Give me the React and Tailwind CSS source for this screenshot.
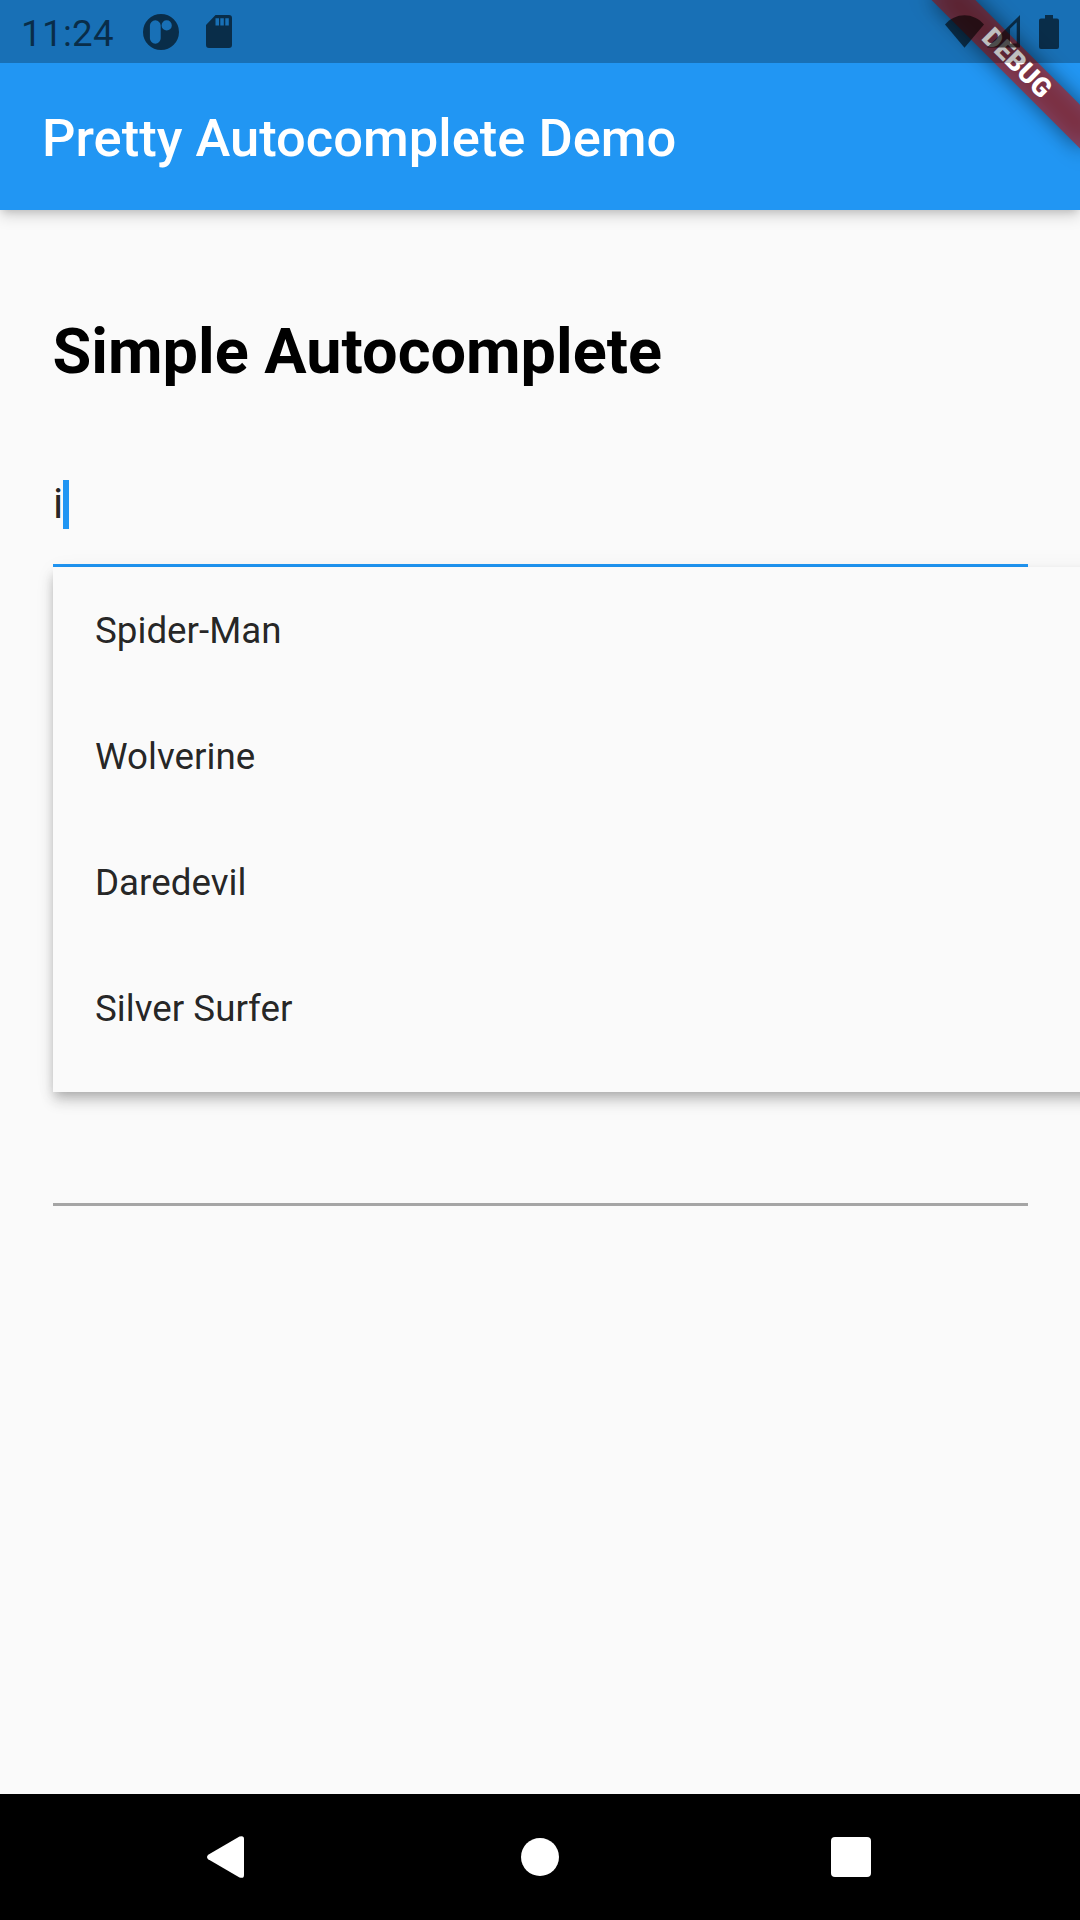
const heroes = ["Spider-Man", "Wolverine", "Daredevil", "Silver Surfer"];

function DebugBanner() {
  return (
    <div className="absolute left-full top-0 h-0 w-0 origin-top-left rotate-45">
      <div className="absolute -left-[105px] top-[73.5px] h-[31.5px] w-[210px] bg-black/50 blur-[10.4px]" />
      <div className="absolute -left-[105px] top-[73.5px] flex h-[31.5px] w-[210px] items-center justify-center bg-[#b71c1c]/63 text-[26.775px] leading-none font-black text-white">
        DEBUG
      </div>
    </div>
  );
}

function StatusBar() {
  return (
    <div className="relative z-20 flex h-[63px] shrink-0 items-center bg-black/25 pl-[21px] text-black/60">
      <span className="w-[122px] pt-[4px] text-[36.75px] leading-[59px] tracking-[0.3px]">11:24</span>
      <svg className="h-[36px] w-[36px]" viewBox="0 0 36 36" fill="currentColor" fillRule="evenodd">
        <path d="M18 0a18 18 0 1 1 0 36a18 18 0 0 1 0-36ZM12.3 6.3a5.4 5.4 0 0 0-5.4 5.4v12.6a5.4 5.4 0 0 0 10.8 0v-12.6a5.4 5.4 0 0 0-5.4-5.4ZM23.7 6.3a5.1 5.1 0 1 0 0 10.2a5.1 5.1 0 0 0 0-10.2Z" />
      </svg>
      <svg className="ml-[27px] h-[33px] w-[26px]" viewBox="0 0 26 33" fill="currentColor" fillRule="evenodd">
        <path d="M9.5 0H23a3 3 0 0 1 3 3V30a3 3 0 0 1-3 3H3a3 3 0 0 1-3-3V10ZM9.5 3.3V10.6H13V3.3ZM14.3 3.3V10.6H17.8V3.3ZM19.3 3.3V10.6H22.8V3.3Z" />
      </svg>
      <div className="ml-auto flex items-start pr-[21px]">
        <svg className="h-[33px] w-[39px]" viewBox="0 0 39 33" fill="currentColor">
          <path d="M0 9.5C5 3.7 12 .3 19.5 .3S34 3.7 39 9.5L19.5 32.7Z" />
        </svg>
        <svg className="ml-[3px] h-[33px] w-[33px]" viewBox="0 0 33 33" fill="currentColor" fillRule="evenodd">
          <path d="M33 0V32.5H0ZM23 13.8V28.5H29.7V7.2Z" />
        </svg>
        <svg className="ml-[19px] h-[34px] w-[20px]" viewBox="0 0 20 34" fill="currentColor">
          <path d="M6 0h8v3.5h4a2 2 0 0 1 2 2V32a2 2 0 0 1-2 2H2a2 2 0 0 1-2-2V5.5a2 2 0 0 1 2-2h4Z" />
        </svg>
      </div>
    </div>
  );
}

function Suggestions() {
  return (
    <ul className="absolute left-0 top-[calc(100%+3px)] z-10 w-[1080px] bg-[#fafafa] pb-[21px] shadow-[0_5px_10px_-3px_rgba(0,0,0,0.2),0_10px_13px_0_rgba(0,0,0,0.14),0_3px_20px_0_rgba(0,0,0,0.06)]">
      {heroes.map((name) => (
        <li key={name} className="flex h-[126px] items-center pl-[42.5px] pt-[2px] text-[36.75px] leading-none text-black/87">
          {name}
        </li>
      ))}
    </ul>
  );
}

function NavigationBar() {
  return (
    <nav className="flex h-[126px] shrink-0 items-center bg-black text-white">
      <svg className="ml-[207px] h-[42px] w-[37px]" viewBox="0 0 37 42" fill="currentColor">
        <path d="M1.2 18.7L32.5 .6Q37-1 37 3V39Q37 43 32.5 41.4L1.2 23.3Q-1.2 21 1.2 18.7Z" />
      </svg>
      <div className="ml-[277px] h-[38px] w-[38px] rounded-full bg-white" />
      <div className="ml-[272px] h-[39.5px] w-[39.5px] rounded-[4px] bg-white" />
    </nav>
  );
}

export default function App() {
  return (
    <div className="relative flex h-[1920px] w-[1080px] flex-col overflow-hidden bg-[#fafafa] font-['Roboto',sans-serif]">
      <header className="relative z-10 flex h-[210px] shrink-0 flex-col bg-[#2196f3] shadow-[0_4px_8px_-3px_rgba(0,0,0,0.16),0_6px_14px_0_rgba(0,0,0,0.15)]">
        <DebugBanner />
        <StatusBar />
        <h1 className="flex flex-1 items-center pl-[42px] pt-[4px] text-[52.5px] leading-none font-medium text-white">
          Pretty Autocomplete Demo
        </h1>
      </header>
      <main className="flex flex-1 flex-col px-[52.5px]">
        <h2 className="mt-[105px] text-[63px] leading-[74px] font-bold text-black">Simple Autocomplete</h2>
        <div className="relative mt-[52px] flex h-[126px] flex-col border-b-[3px] border-[#2196f3] pt-[39px]">
          <div className="flex h-[49px] items-center">
            <span className="pl-[0.5px] pb-[2px] text-[42px] leading-[47px] text-black/87">i</span>
            <span className="h-[49px] w-[6px] bg-[#2196f3]" />
          </div>
          <Suggestions />
        </div>
        <div className="mt-[513px] h-[126px] border-b-[3px] border-[#a5a5a5]" />
      </main>
      <NavigationBar />
    </div>
  );
}
